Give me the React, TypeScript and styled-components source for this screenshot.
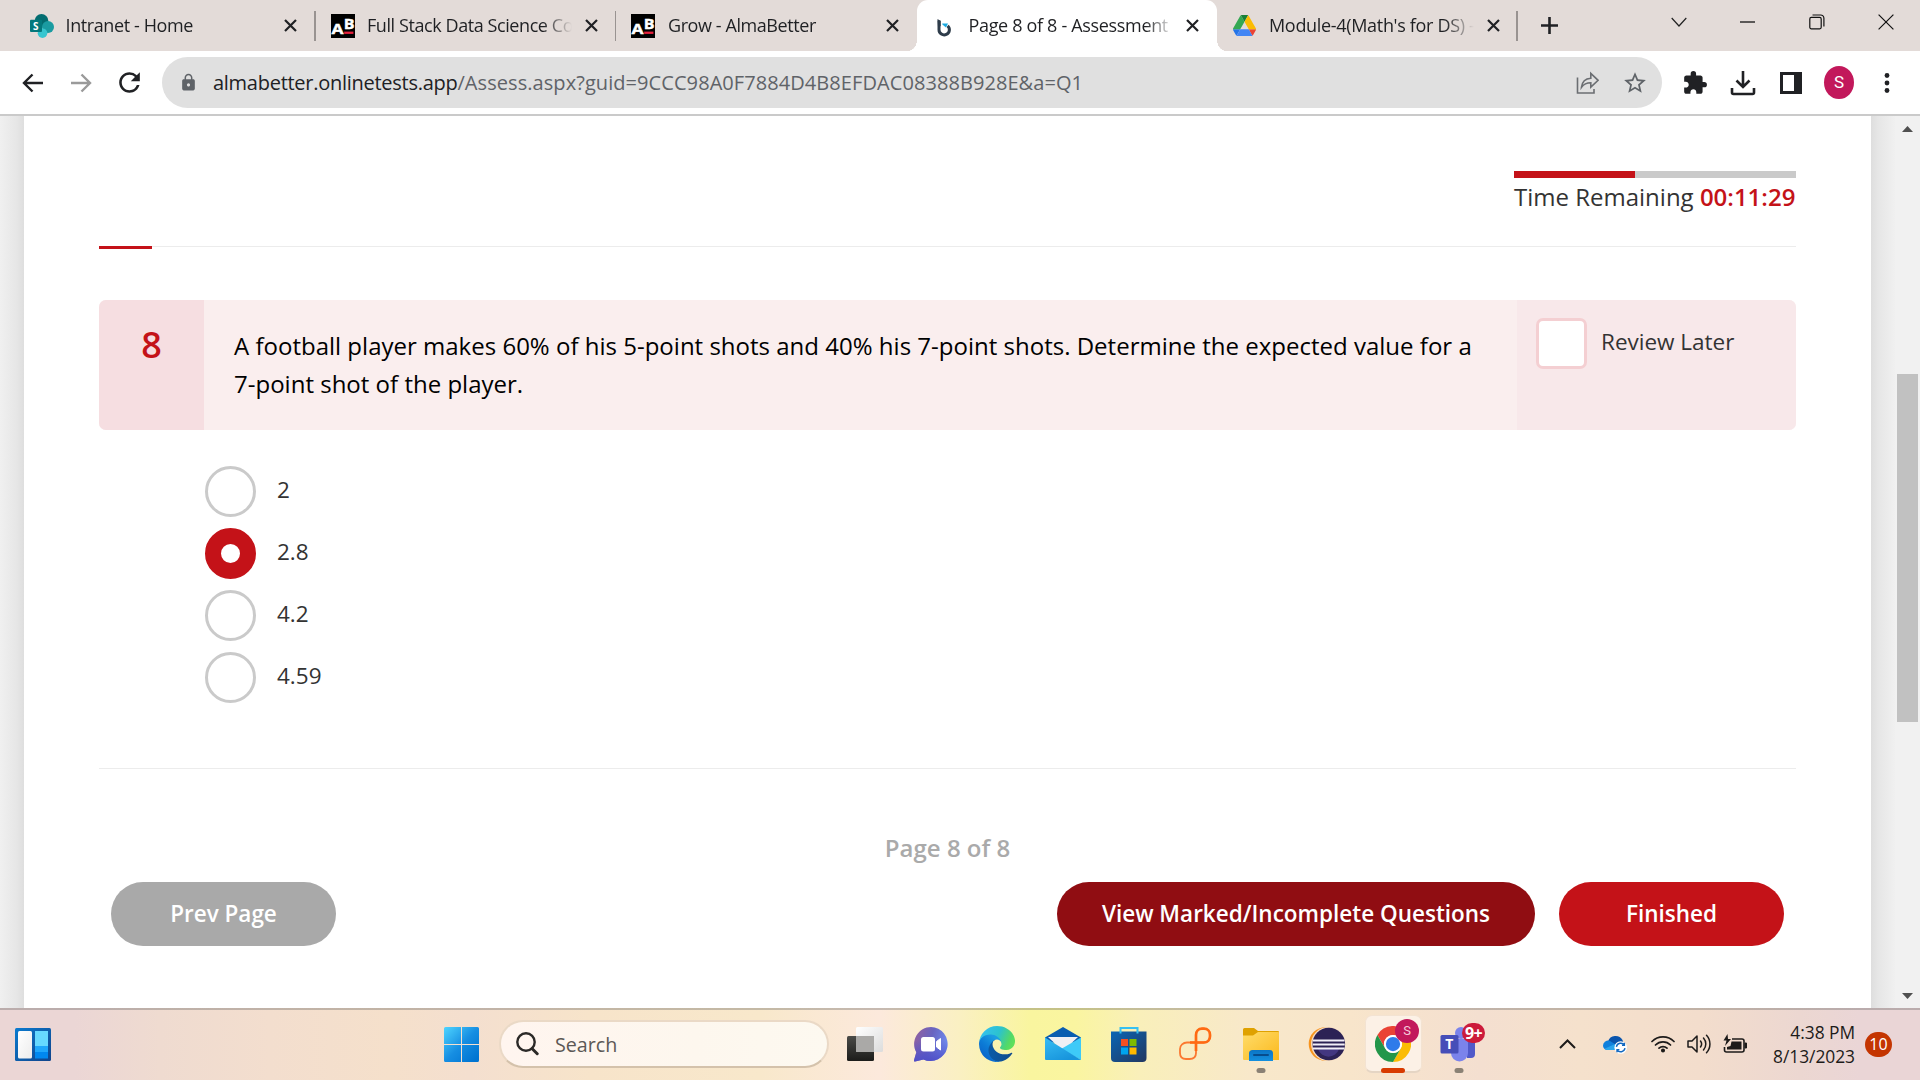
import React from "react";
import styled, { createGlobalStyle } from "styled-components";
import { MdExtension, MdLock, MdRefresh, MdStarBorder } from "react-icons/md";

const Global = createGlobalStyle`
  * { box-sizing: border-box; }
  html, body { margin: 0; padding: 0; background: #fff; overflow: hidden; }
  body { font-family: "Open Sans", "Noto Sans", sans-serif; color: #333; }
  svg { display: block; flex: none; }
`;

const Screen = styled.div`
  width: 1920px;
  height: 1080px;
  display: flex;
  flex-direction: column;
  overflow: hidden;
`;

/* ---------- Browser chrome ---------- */

const TabStrip = styled.div`
  height: 51px;
  flex: none;
  background: #e3dbd8;
  display: flex;
  padding-left: 15px;
`;

const TabBox = styled.div<{ $active?: boolean }>`
  position: relative;
  width: 300.5px;
  flex: none;
  height: 51px;
  display: flex;
  align-items: center;
  padding: 0 7px 0 15px;
  background: ${(p) => (p.$active ? "#fff" : "transparent")};
  border-radius: ${(p) => (p.$active ? "11px 11px 0 0" : "0")};
  ${(p) =>
    p.$active &&
    `&::before, &::after {
      content: "";
      position: absolute;
      bottom: 0;
      width: 9px;
      height: 11px;
    }
    &::before { left: -9px; background: radial-gradient(ellipse 9px 11px at 0 0, transparent 97%, #fff 100%); }
    &::after { right: -9px; background: radial-gradient(ellipse 9px 11px at 100% 0, transparent 97%, #fff 100%); }`}
`;

const Favicon = styled.div<{ $gap?: number }>`
  width: 24px;
  height: 24px;
  margin: 0 ${(p) => p.$gap ?? 12.5}px 0 0;
  display: flex;
  align-items: center;
  justify-content: center;
`;

const TabTitle = styled.div<{ $tracking?: number }>`
  width: 207px;
  height: 30px;
  line-height: 29px;
  font-size: 18px;
  letter-spacing: ${(p) => p.$tracking ?? -0.42}px;
  color: #1f2023;
  white-space: nowrap;
  overflow: hidden;
  mask-image: linear-gradient(90deg, #000 176px, transparent 205px);
`;

const CloseSlot = styled.div`
  flex: 1;
  display: flex;
  justify-content: center;
`;

const Divider = styled.div`
  position: absolute;
  right: 0;
  top: 11px;
  width: 1.5px;
  height: 30px;
  background: #999391;
`;

const NewTab = styled.div`
  width: 64px;
  display: flex;
  align-items: center;
  justify-content: center;
`;

const WindowControls = styled.div`
  margin-left: auto;
  display: flex;
  height: 43px;
`;

const WindowButton = styled.div`
  width: 69px;
  display: flex;
  align-items: center;
  justify-content: center;
`;

const Toolbar = styled.div`
  height: 65px;
  flex: none;
  background: #fff;
  border-bottom: 2px solid #cacaca;
  display: flex;
  align-items: center;
  padding-left: 9px;
`;

const ToolButton = styled.div<{ $w?: number }>`
  width: ${(p) => p.$w ?? 48}px;
  display: flex;
  justify-content: center;
  align-items: center;
  color: #202124;
`;

const AddressBar = styled.div`
  margin-left: 9px;
  width: 1500px;
  height: 51px;
  border-radius: 26px;
  background: #e0e0e0;
  display: flex;
  align-items: center;
  padding: 0 3px 0 17px;
  color: #5f6368;
`;

const Url = styled.div`
  flex: 1;
  margin-left: 15px;
  font-size: 20px;
  line-height: 28px;
  white-space: nowrap;
  color: #5f6368;
  letter-spacing: 0.07px;
`;

const Host = styled.span`
  color: #202124;
  letter-spacing: -0.27px;
`;

const Avatar = styled.div`
  width: 33px;
  height: 33px;
  border-radius: 50%;
  background: #c2185b;
  color: #fff;
  font: 400 17px/33px Roboto, sans-serif;
  text-align: center;
`;

/* ---------- Assessment page ---------- */

const Viewport = styled.div`
  height: 892px;
  flex: none;
  display: flex;
  background: #f1f1f1;
`;

const Gutter = styled.div<{ $side: "left" | "right" }>`
  width: 24px;
  background: linear-gradient(to ${(p) => p.$side}, #dedede, #e6e6e6 30%, #f0f0f0);
`;

const Sheet = styled.main`
  width: 1847px;
  background: #fff;
  padding: 55px 75px 0;
  display: flex;
  flex-direction: column;
`;

const Timer = styled.div`
  width: 282px;
  height: 75px;
  align-self: flex-end;
  font-size: 24px;
  line-height: 38px;
  white-space: nowrap;
`;

const TimerTrack = styled.div`
  height: 7px;
  background: #cacaca;
`;

const TimerFill = styled.div`
  width: 121px;
  height: 7px;
  background: #c41218;
`;

const TimeLeft = styled.span`
  color: #c41218;
  font-weight: 600;
`;

const ProgressRule = styled.div`
  height: 3px;
  background: linear-gradient(#ececec 1px, #fff 1px);
`;

const ProgressFill = styled.div`
  width: 53px;
  height: 3px;
  background: #c41218;
`;

const Question = styled.section`
  margin-top: 51px;
  height: 130px;
  display: flex;
  border-radius: 7px;
  overflow: hidden;
  background: #faeeee;
`;

const QuestionNumber = styled.div`
  width: 105px;
  padding-top: 20px;
  background: #f6dee1;
  color: #c41218;
  font-size: 36px;
  font-weight: 600;
  line-height: 50px;
  text-align: center;
`;

const QuestionText = styled.p`
  margin: 0;
  width: 1313px;
  padding: 27px 30px;
  font-size: 24px;
  line-height: 38px;
  letter-spacing: 0.008px;
  color: #000;
`;

const Review = styled.label`
  flex: 1;
  display: flex;
  padding: 18px 0 0 19px;
  background: #f8e8ea;
  font-size: 22.5px;
  line-height: 48px;
`;

const Checkbox = styled.span`
  width: 51px;
  height: 51px;
  margin-right: 14px;
  border: 3px solid #f4cfd2;
  border-radius: 7px;
  background: #fff;
`;

const Options = styled.div`
  margin: 36px 0 0 106px;
  display: flex;
  flex-direction: column;
  gap: 11px;
`;

const Option = styled.label`
  height: 51px;
  display: flex;
  font-size: 22.5px;
  line-height: 48px;
`;

const Radio = styled.span<{ $checked?: boolean }>`
  width: 51px;
  height: 51px;
  margin-right: 21px;
  border-radius: 50%;
  border: ${(p) => (p.$checked ? "16px solid #c41218" : "3px solid #cacaca")};
  background: #fff;
`;

const Rule = styled.div`
  margin-top: 65px;
  height: 1px;
  background: #ececec;
`;

const PageCount = styled.div`
  margin-top: 61px;
  height: 36px;
  line-height: 36px;
  font-size: 24px;
  font-weight: 600;
  color: #aaa;
  text-align: center;
`;

const Actions = styled.div`
  margin-top: 16px;
  padding: 0 12px;
  display: flex;
  gap: 24px;
`;

const Button = styled.button<{ $bg: string; $w: number }>`
  width: ${(p) => p.$w}px;
  height: 64px;
  border: 0;
  border-radius: 32px;
  background: ${(p) => p.$bg};
  color: #fff;
  font: 600 22.5px/64px "Open Sans", sans-serif;
  padding: 0;
  white-space: nowrap;
  &:first-child { margin-right: auto; }
`;

const Scrollbar = styled.div`
  width: 25px;
  padding: 10px 2px 9px;
  display: flex;
  flex-direction: column;
  align-items: center;
`;

const Thumb = styled.div`
  margin: 242px 0 auto;
  width: 21px;
  height: 348px;
  background: #c1c1c1;
`;

/* ---------- Taskbar ---------- */

const Taskbar = styled.div`
  height: 72px;
  flex: none;
  display: flex;
  align-items: center;
  background: linear-gradient(rgba(80, 80, 80, 0.31) 2px, transparent 2px),
    linear-gradient(90deg, #ebd6d5 0, #ebd6d5 75px, #efdbd0 160px, #f3dece 270px, #f5e0cb 390px, #f4dfcf 470px, #f7e4ca 590px, #f8e8cb 760px, #fce9dc 880px, #faf0c2 960px, #f9f59f 1030px, #faf5a0 1075px, #f9efba 1140px, #f8e8ca 1250px, #f8e5cb 1350px, #f4dfd0 1480px, #f5e1cc 1580px, #f3ddcc 1700px, #ecd7d1 1800px, #ead5d6 1860px);
`;

const WidgetsSlot = styled.div`
  width: 437px;
  padding-left: 15px;
`;

const StartSlot = styled.div`
  width: 62px;
  padding-left: 7px;
`;

const SearchBox = styled.div`
  width: 330px;
  height: 48px;
  margin-right: 3px;
  border-radius: 24px;
  border: 2px solid #ead9c6;
  border-bottom-color: #d4c2ab;
  background: linear-gradient(90deg, #fff5ef, #fdf7ee 60%, #fdf9f0);
  display: flex;
  align-items: center;
  padding-left: 15px;
  font-size: 19.7px;
  color: #5c5855;
  gap: 16px;
`;

const SearchLabel = styled.span`
  line-height: 26px;
  padding-top: 1px;
`;

const AppSlot = styled.div`
  position: relative;
  width: 66px;
  height: 58px;
  display: flex;
  align-items: center;
  justify-content: center;
`;

const ActiveTile = styled.div`
  width: 57px;
  height: 58px;
  border-radius: 7px;
  border: 1px solid #f3e3d2;
  border-bottom: 2px solid #e5d5c4;
  background: #fcf1e6;
  display: flex;
  align-items: center;
  justify-content: center;
`;

const Indicator = styled.div<{ $active?: boolean }>`
  position: absolute;
  bottom: 0;
  left: 50%;
  transform: translateX(-50%);
  width: ${(p) => (p.$active ? 24 : 9)}px;
  height: 5px;
  border-radius: 3px;
  background: ${(p) => (p.$active ? "#d83b01" : "#8a8175")};
`;

const Badge = styled.div<{ $bg: string; $w: number; $x: number; $y: number }>`
  position: absolute;
  left: ${(p) => p.$x}px;
  top: ${(p) => p.$y}px;
  width: ${(p) => p.$w}px;
  height: ${(p) => (p.$w === 24 ? 24 : 20)}px;
  border-radius: 12px;
  background: ${(p) => p.$bg};
  display: flex;
  align-items: center;
  justify-content: center;
`;

const AvatarLetter = styled.span`
  font: 400 13px/24px Roboto, sans-serif;
  color: #f6c9da;
`;

const UnreadCount = styled.span`
  font: 700 16px/20px "Open Sans", sans-serif;
  letter-spacing: -0.6px;
  color: #fff;
`;

const Tray = styled.div`
  margin-left: auto;
  display: flex;
  align-items: center;
  padding: 0 28px 0 0;
`;

const TrayItem = styled.div<{ $gap: number }>`
  margin-right: ${(p) => p.$gap}px;
`;

const Clock = styled.div`
  width: 96px;
  padding-top: 0;
  text-align: right;
  font-size: 17.4px;
  line-height: 24px;
  letter-spacing: -0.05px;
  color: #1d1b1a;
  margin: -1px 10px 0 0;
`;

const Notice = styled.div`
  width: 27px;
  height: 25px;
  border-radius: 13px;
  background: #c43501;
  color: #fff;
  font-size: 16px;
  line-height: 24px;
  text-align: center;
`;

const AbText = styled.text`
  font: 700 14px "Open Sans", sans-serif;
`;

const SvgLetter = styled.text`
  font: 700 10px "Open Sans", sans-serif;
`;

const TeamsLetter = styled.text`
  font: 700 14px "Open Sans", sans-serif;
`;

/* ---------- Icons ---------- */

const SharePoint = () => (
  <svg width="24" height="24" viewBox="0 0 24 24">
    <circle cx="11.5" cy="6.8" r="6.8" fill="#036c70" />
    <circle cx="18" cy="13" r="6" fill="#1a9ba1" />
    <circle cx="12.5" cy="19.2" r="4.8" fill="#37c6d0" />
    <rect x="0" y="5.7" width="12" height="12.4" rx="1" fill="#03787c" />
    <SvgLetter x="3" y="15.6" fill="#fff">S</SvgLetter>
  </svg>
);

const AlmaBetter = () => (
  <svg width="24" height="24" viewBox="0 0 24 24">
    <rect width="24" height="24" fill="#000" />
    <AbText x="0.5" y="20" fill="#fff" stroke="#fff" strokeWidth="0.4" fontSize="16" textLength="12" lengthAdjust="spacingAndGlyphs">A</AbText>
    <AbText x="12.8" y="15.2" fill="#fff" stroke="#fff" strokeWidth="0.4" textLength="10.800" lengthAdjust="spacingAndGlyphs">B</AbText>
    <rect x="13.2" y="17.6" width="9.2" height="2.3" fill="#e8203c" />
  </svg>
);

const Assessment = () => (
  <svg width="16" height="24" viewBox="0 0 16 24">
    <path d="M1.500 5l3.200 2v5L2 13.6z" fill="#2e3c4a" />
    <path d="M3 6.500v9.200a5.200 5.200 0 1 0 8.600-3.900" fill="none" stroke="#2e3c4a" strokeWidth="3" />
    <path d="M6.200 9.600h5.800l-2 4-3.600-3z" fill="#19a9e0" />
  </svg>
);

const Drive = () => (
  <svg width="23" height="21" viewBox="0 0 87.3 78" preserveAspectRatio="none">
    <path d="M6.6 66.85l3.85 6.65c.8 1.4 1.95 2.5 3.3 3.3L27.5 53H0c0 1.55.4 3.1 1.2 4.5z" fill="#2474e8" />
    <path d="M43.65 25L29.9 1.2c-1.35.8-2.5 1.9-3.3 3.3l-25.4 44A9.06 9.06 0 0 0 0 53h27.5z" fill="#34a853" />
    <path d="M73.55 76.8c1.35-.8 2.5-1.9 3.3-3.3l1.6-2.75L86.1 57.5c.8-1.4 1.2-2.95 1.2-4.5H59.8l5.85 11.5z" fill="#ea4335" />
    <path d="M43.65 25L57.4 1.2C56.05.4 54.5 0 52.9 0H34.4c-1.6 0-3.15.45-4.5 1.2z" fill="#188038" />
    <path d="M59.8 53H27.5L13.75 76.8c1.35.8 2.9 1.2 4.5 1.2h50.8c1.6 0 3.15-.45 4.5-1.2z" fill="#4285f4" />
    <path d="M73.4 26.5l-12.7-22c-.8-1.4-1.95-2.5-3.3-3.3L43.65 25 59.8 53h27.45c0-1.55-.4-3.1-1.2-4.5z" fill="#fbbc04" />
  </svg>
);

const CloseMark = () => (
  <svg width="13" height="13" viewBox="0 0 13 13">
    <path d="M1 1l11 11M12 1L1 12" stroke="#202124" strokeWidth="2.2" />
  </svg>
);

const Arrow = ({ flip, color }: { flip?: boolean; color: string }) => (
  <svg width="22" height="20" viewBox="0 0 22 20">
    <path
      d={flip ? "M1 10h18M11.5 1.5L20 10l-8.5 8.5" : "M21 10H3M10.5 1.5L2 10l8.5 8.5"}
      fill="none"
      stroke={color}
      strokeWidth="2.4"
    />
  </svg>
);

const ShareIcon = () => (
  <svg width="24" height="24" viewBox="0 0 24 24" fill="none" stroke="#6b6e72" strokeWidth="1.6">
    <path d="M2.500 6.500v15.500h16.500v-4" />
    <path d="M6.500 16.200c.6-5.600 3.700-8.600 9.300-9V2.300l7.300 7-7.300 6.800v-4.400c-4.200 0-7.100 1.400-9.300 4.500z" />
  </svg>
);

const DownloadIcon = () => (
  <svg width="26" height="26" viewBox="0 0 26 26" fill="none" stroke="#202124" strokeWidth="2.600">
    <path d="M13 1v15M6.500 10.500L13 17l6.500-6.500M2 18v4.500a1.500 1.500 0 0 0 1.500 1.500h19a1.500 1.500 0 0 0 1.500-1.500V18" />
  </svg>
);

const PanelIcon = () => (
  <svg width="22" height="22" viewBox="0 0 22 22">
    <path d="M0 0h22v22H0zM3 3v16h11V3z" fill="#202124" fillRule="evenodd" />
  </svg>
);

const DotsIcon = () => (
  <svg width="6" height="20" viewBox="0 0 6 20" fill="#202124">
    <circle cx="3" cy="2.500" r="2.400" />
    <circle cx="3" cy="10" r="2.400" />
    <circle cx="3" cy="17.500" r="2.400" />
  </svg>
);

const Triangle = ({ down }: { down?: boolean }) => (
  <svg width="11" height="6" viewBox="0 0 11 6">
    <path d={down ? "M0 0h11L5.5 6z" : "M0 6h11L5.5 0z"} fill="#505050" />
  </svg>
);

const Widgets = () => (
  <svg width="36" height="33" viewBox="0 0 36 33">
    <defs>
      <linearGradient id="wd" x1="0" y1="0" x2="1" y2="1"><stop stopColor="#0a7bd0" /><stop offset="1" stopColor="#11438a" /></linearGradient>
      <linearGradient id="ww" x1="0" y1="0" x2="1" y2="1"><stop stopColor="#fff" /><stop offset="1" stopColor="#ececec" /></linearGradient>
    </defs>
    <rect width="36" height="33" rx="1.500" fill="url(#wd)" />
    <rect x="3" y="3" width="14" height="27.500" rx="1.500" fill="url(#ww)" />
    <path d="M20 3h13v15H20z" fill="#66d9ff" />
    <path d="M20 18h13v6H20z" fill="#1fa7fb" />
    <path d="M20 24h13v6.500H20z" fill="#0088f0" />
  </svg>
);

const Windows = () => (
  <svg width="35" height="35" viewBox="0 0 35 35">
    <defs>
      <linearGradient id="win" gradientUnits="userSpaceOnUse" x1="0" y1="0" x2="32" y2="32"><stop stopColor="#4fd5ff" /><stop offset="0.550" stopColor="#168ee2" /><stop offset="1" stopColor="#0074d1" /></linearGradient>
    </defs>
    <path d="M1.500 0H17v17H0V1.500A1.500 1.500 0 0 1 1.500 0zM18 0h15.500A1.500 1.500 0 0 1 35 1.500V17H18zM0 18h17v17H1.500A1.500 1.500 0 0 1 0 33.500zM18 18h17v15.500a1.500 1.500 0 0 1-1.500 1.500H18z" fill="url(#win)" />
  </svg>
);

const Magnifier = () => (
  <svg width="23" height="24" viewBox="0 0 23 24" fill="none" stroke="#2b2927" strokeLinecap="round">
    <circle cx="10" cy="10" r="8.700" strokeWidth="2.400" />
    <path d="M16.200 16.700l5 5" strokeWidth="3" />
  </svg>
);

const TaskView = () => (
  <svg width="48" height="48" viewBox="0 0 48 48">
    <defs>
      <linearGradient id="tvd" x1="0" y1="0" x2="0" y2="1"><stop stopColor="#4b4b48" /><stop offset="1" stopColor="#1c1c1a" /></linearGradient>
      <linearGradient id="tvl" x1="0" y1="0" x2="1" y2="1"><stop stopColor="#fff" /><stop offset="1" stopColor="#dcdcdc" /></linearGradient>
    </defs>
    <rect x="6" y="16" width="27" height="25" rx="1.500" fill="url(#tvd)" />
    <rect x="15" y="7" width="27" height="25" rx="1.500" fill="url(#tvl)" />
    <path d="M15 16h18v16H16.500a1.500 1.500 0 0 1-1.500-1.500z" fill="#aaa9a7" />
  </svg>
);

const Chat = () => (
  <svg width="48" height="48" viewBox="0 0 48 48">
    <defs>
      <linearGradient id="ch" x1="0" y1="0.200" x2="1" y2="0.500"><stop stopColor="#9160a0" /><stop offset="0.500" stopColor="#6964c0" /><stop offset="1" stopColor="#6f8cf0" /></linearGradient>
      <linearGradient id="ch2" x1="0" y1="0" x2="0" y2="1"><stop offset="0.400" stopColor="#4f4fc8" stopOpacity="0" /><stop offset="1" stopColor="#4f4fc8" /></linearGradient>
    </defs>
    {["url(#ch)", "url(#ch2)"].map((f) => (
      <path key={f} d="M24 7a17 17 0 1 1-7.600 32.400L8 41.500c-1 .2-1.200-.6-1-1.200l2.300-8A17 17 0 0 1 24 7z" fill={f} />
    ))}
    <rect x="14" y="17" width="14" height="14.500" rx="2.500" fill="#fff" />
    <path d="M29.500 21.500l4-3v11.500l-4-3z" fill="#fff" stroke="#fff" />
  </svg>
);

const Edge = () => (
  <svg width="36" height="36" viewBox="0 0 256 256">
    <defs>
      <linearGradient id="e1" x1="0.200" y1="0.700" x2="1" y2="0.700"><stop stopColor="#0c59a4" /><stop offset="1" stopColor="#114a8b" /></linearGradient>
      <linearGradient id="e2" x1="0.700" y1="0.200" x2="0.200" y2="0.900"><stop stopColor="#1b9de2" /><stop offset="0.500" stopColor="#0c7bd6" /><stop offset="1" stopColor="#0a63c8" /></linearGradient>
      <linearGradient id="e3" x1="0" y1="0.300" x2="1" y2="0.600"><stop stopColor="#35c1f1" /><stop offset="0.500" stopColor="#2cc2cf" /><stop offset="0.850" stopColor="#52d967" /><stop offset="1" stopColor="#5fe05a" /></linearGradient>
    </defs>
    <path d="M231 190.500c-3.400 1.800-6.900 3.400-10.500 4.700a101 101 0 0 1-35.900 6.500c-47.300 0-88.500-32.500-88.500-74.300a31.500 31.500 0 0 1 16.400-27.300c-42.800 1.800-53.800 46.400-53.800 72.500 0 73.900 68.100 81.400 82.800 81.400 7.900 0 19.800-2.300 27-4.600l1.300-.4a128.300 128.300 0 0 0 66.600-52.800 4 4 0 0 0-5.400-5.700z" fill="url(#e1)" />
    <path d="M105.700 241.400a79.200 79.200 0 0 1-22.700-21.300 80.700 80.700 0 0 1 29.500-120c3.200-1.500 8.500-4.100 15.600-4a32.400 32.400 0 0 1 25.700 13 31.900 31.900 0 0 1 6.300 18.700c0-.2 24.500-79.600-80-79.600-43.900 0-80 41.600-80 78.200a130.200 130.200 0 0 0 12.100 56 128 128 0 0 0 156.400 67 75.500 75.500 0 0 1-62.800-8z" fill="url(#e2)" />
    <path d="M152.300 148.900c-.9 1-3.400 2.500-3.400 5.600 0 2.600 1.700 5.200 4.800 7.300 14.400 10.100 41.700 8.700 41.800 8.700a60 60 0 0 0 30.300-8.400c18.800-11 30.400-31.100 30.400-52.900.3-22.400-8-37.300-11.300-43.900C223.400 23.900 177.400 0 128 0A128 128 0 0 0 0 126.200c.5-36.500 36.800-66 80-66 3.500 0 23.500.3 42 10.100 16.300 8.600 24.900 19 30.800 29.200 6.200 10.700 7.300 24.100 7.300 29.500 0 5.300-2.700 13.300-7.800 19.900z" fill="url(#e3)" />
  </svg>
);

const Mail = () => (
  <svg width="48" height="48" viewBox="0 0 48 48">
    <defs>
      <linearGradient id="ml" x1="0" y1="0" x2="0.600" y2="1"><stop stopColor="#38bdf3" /><stop offset="1" stopColor="#1794dc" /></linearGradient>
    </defs>
    <path d="M6 17.500L24 7l18 10.500v5H6z" fill="#0a5db0" />
    <path d="M9 17h30L24 31z" fill="#f1f0f4" />
    <path d="M42 17.500v22.500L22 29z" fill="#3ecaf8" />
    <path d="M6 17.500L42 40H7a1 1 0 0 1-1-1z" fill="url(#ml)" />
  </svg>
);

const Store = () => (
  <svg width="48" height="48" viewBox="0 0 48 48">
    <defs>
      <linearGradient id="st" x1="0" y1="0" x2="1" y2="1"><stop stopColor="#0a66b5" /><stop offset="1" stopColor="#223760" /></linearGradient>
    </defs>
    <path d="M6 11.500h35.500V38a4 4 0 0 1-4 4H10a4 4 0 0 1-4-4z" fill="url(#st)" />
    <path d="M15.500 13.500V8h17v5.500" fill="none" stroke="#35c0f2" strokeWidth="2" />
    <path d="M16 19h7v7h-7z" fill="#f25022" />
    <path d="M24.500 19h7v7h-7z" fill="#7fba00" />
    <path d="M16 27.500h7v7h-7z" fill="#00a4ef" />
    <path d="M24.500 27.500h7v7h-7z" fill="#ffb900" />
  </svg>
);

const Loop = () => (
  <svg width="48" height="48" viewBox="0 0 48 48" fill="none">
    <path d="M25 33V15c0-4 2.500-6.300 6-6.300h2c3.500 0 6 2.500 6 6v1.500c0 3.800-2.600 6.300-6.300 6.300H16c-3.800 0-7 2.700-7 6.500V33c0 3.700 2.200 6 6 6h3.500c4 0 6.500-2 6.500-6z" stroke="#fb7830" strokeWidth="1.800" />
    <path d="M25 31V15c0-4 2.500-6.300 6-6.300h2c3.500 0 6 2.500 6 6v1.500c0 3.800-2.600 6.300-6.300 6.300H19" stroke="#ff6a13" strokeWidth="2.700" />
  </svg>
);

const Folder = () => (
  <svg width="48" height="48" viewBox="0 0 48 48">
    <defs>
      <linearGradient id="fo" x1="0" y1="0" x2="1" y2="1"><stop stopColor="#ffdc6a" /><stop offset="1" stopColor="#fbb91d" /></linearGradient>
      <linearGradient id="fb" x1="0" y1="0" x2="0" y2="1"><stop stopColor="#0b74c4" /><stop offset="1" stopColor="#1490df" /></linearGradient>
    </defs>
    <path d="M6 9.500A1.500 1.500 0 0 1 7.500 8h9.500l4 3h20a1 1 0 0 1 1 1v6H6z" fill="#dfa100" />
    <path d="M6 15.500h10l5-3.500h20.500l.5.500V40H7a1 1 0 0 1-1-1z" fill="url(#fo)" />
    <path d="M12 41v-7.500a3.500 3.500 0 0 1 3.500-3.500h17a3.500 3.500 0 0 1 3.500 3.500V41z" fill="url(#fb)" />
    <path d="M17 35h14" stroke="#074c8c" strokeWidth="2" strokeLinecap="round" />
  </svg>
);

const Eclipse = () => (
  <svg width="48" height="48" viewBox="0 0 48 48">
    <circle cx="22.500" cy="24" r="16.800" fill="#f7941e" />
    <circle cx="25" cy="24" r="17" fill="#f6dcc0" />
    <circle cx="25.800" cy="24" r="16.300" fill="#2c2255" />
    <path d="M15 29h21a11 11 0 0 1-21 0z" fill="#433780" />
    <path d="M10 20.500h31.500M9.700 24.500h32M10 28.500h31.500" stroke="#f2eff8" strokeWidth="2" />
  </svg>
);

const Chrome = () => (
  <svg width="36" height="36" viewBox="0 0 48 48">
    <path d="M24 12h20.800A24 24 0 0 0 3.200 12l10.400 18A12 12 0 0 1 24 12z" fill="#ea4335" />
    <path d="M34.400 30L24 48A24 24 0 0 0 44.800 12H24a12 12 0 0 1 10.400 18z" fill="#fbbc04" />
    <path d="M13.600 30L3.200 12A24 24 0 0 0 24 48l10.400-18a12 12 0 0 1-20.800 0z" fill="#23964a" />
    <circle cx="24" cy="24" r="12" fill="#fff" />
    <circle cx="24" cy="24" r="9.500" fill="#2f7bea" />
  </svg>
);

const Teams = () => (
  <svg width="48" height="48" viewBox="0 0 48 48">
    <circle cx="38.500" cy="14" r="5" fill="#4b53bc" />
    <path d="M32 20h8v14a4 4 0 0 1-4 4h-4z" fill="#5059c9" />
    <circle cx="26" cy="13" r="6" fill="#7b83eb" />
    <path d="M16 19h17v14a8.500 8.500 0 0 1-17 0z" fill="#7b83eb" />
    <rect x="5.500" y="15" width="18" height="18.500" rx="1.500" fill="#464eb8" />
    <TeamsLetter x="10.300" y="29.300" fill="#fff">T</TeamsLetter>
  </svg>
);

const OneDrive = () => (
  <svg width="24" height="20" viewBox="0 0 24 20">
    <path d="M5 7.500A8 8 0 0 1 19.500 6l1 3-9 6z" fill="#0a55ad" />
    <path d="M0 11.500a5 5 0 0 1 7-4.500l13 8-1 1H4.500A4.500 4.500 0 0 1 0 11.500z" fill="#1080dc" />
    <path d="M1.500 14.700L12 10l6 6H4.500a4.500 4.500 0 0 1-3-1.300z" fill="#2aa5ec" />
    <circle cx="17.700" cy="13.500" r="6.300" fill="#fff" />
    <path d="M13.400 12.800a4.400 4.400 0 0 1 8-1.600m0-2.400v2.600H19M22 14.200a4.400 4.400 0 0 1-8 1.600m0 2.400v-2.600h2.400" fill="none" stroke="#1268c0" strokeWidth="1.400" />
  </svg>
);

const Wifi = () => (
  <svg width="24" height="18" viewBox="0 0 24 18" fill="none" stroke="#1d1b1a" strokeWidth="1.700" strokeLinecap="round">
    <path d="M1 6.500a15.500 15.500 0 0 1 22 0M4.500 10a10.600 10.600 0 0 1 15 0M8 13.200a5.700 5.700 0 0 1 8 0" />
    <circle cx="12" cy="15.500" r="1.200" fill="#1d1b1a" />
  </svg>
);

const Volume = () => (
  <svg width="25" height="20" viewBox="0 0 25 20" fill="none" stroke="#1d1b1a" strokeWidth="1.500" strokeLinecap="round" strokeLinejoin="round">
    <path d="M1 7h4l5-5v16l-5-5H1zM13.500 7a5 5 0 0 1 0 6M16.500 4a9 9 0 0 1 0 12M19.500 1.200a13 13 0 0 1 0 17.600" />
  </svg>
);

const Battery = () => (
  <svg width="25" height="20" viewBox="0 0 25 20">
    <path d="M9 5h10a2 2 0 0 1 2 2v9a2 2 0 0 1-2 2H3.500a2 2 0 0 1-2-2v-3" fill="none" stroke="#1d1b1a" strokeWidth="1.600" />
    <path d="M8.500 7.500h10v8H4v-2.500l3.500-1z" fill="#1d1b1a" />
    <path d="M22 9h1.500v5H22z" fill="#1d1b1a" stroke="#1d1b1a" />
    <path d="M4.500 0L.5 6.500h3L2 12l6-7H5z" fill="#1d1b1a" />
  </svg>
);

/* ---------- Page data ---------- */

const tabs = [
  { title: "Intranet - Home", icon: <SharePoint />, gap: 11.5, tracking: -0.4 },
  { title: "Full Stack Data Science Co", icon: <AlmaBetter /> },
  { title: "Grow - AlmaBetter", icon: <AlmaBetter />, plain: true, gap: 13 },
  { title: "Page 8 of 8 - Assessment", icon: <Assessment />, active: true, gap: 13, tracking: -0.33 },
  { title: "Module-4(Math's for DS) -", icon: <Drive />, gap: 13, tracking: -0.32 },
];

const answers = ["2", "2.8", "4.2", "4.59"];

export default function App() {
  return (
    <Screen>
      <Global />
      <TabStrip>
        {tabs.map((t) => (
          <TabBox key={t.title} $active={t.active}>
            <Favicon $gap={t.gap}>{t.icon}</Favicon>
            <TabTitle $tracking={t.tracking}>{t.title}</TabTitle>
            <CloseSlot><CloseMark /></CloseSlot>
            {!t.active && !t.plain && <Divider />}
          </TabBox>
        ))}
        <NewTab>
          <svg width="17" height="17" viewBox="0 0 17 17"><path d="M8.500 0v17M0 8.500h17" stroke="#202124" strokeWidth="2.600" /></svg>
        </NewTab>
        <WindowControls>
          <WindowButton>
            <svg width="16" height="10" viewBox="0 0 16 10"><path d="M.7 1L8 9l7.300-8" fill="none" stroke="#222" strokeWidth="1.200" /></svg>
          </WindowButton>
          <WindowButton>
            <svg width="15" height="2" viewBox="0 0 15 2"><path d="M0 1h15" stroke="#111" strokeWidth="1.300" /></svg>
          </WindowButton>
          <WindowButton>
            <svg width="16" height="16" viewBox="0 0 16 16" fill="none" stroke="#111" strokeWidth="1.200">
              <rect x="0.800" y="3.400" width="11.400" height="11.400" rx="1.500" />
              <path d="M3.500 1h8.200a3.200 3.200 0 0 1 3.200 3.200v8.300" />
            </svg>
          </WindowButton>
          <WindowButton>
            <svg width="16" height="16" viewBox="0 0 16 16"><path d="M.6.600l14.800 14.800M15.400.600L.6 15.400" stroke="#111" strokeWidth="1.200" /></svg>
          </WindowButton>
        </WindowControls>
      </TabStrip>

      <Toolbar>
        <ToolButton><Arrow color="#202124" /></ToolButton>
        <ToolButton><Arrow flip color="#9a9a9a" /></ToolButton>
        <ToolButton><MdRefresh size={31} /></ToolButton>
        <AddressBar>
          <MdLock size={19} />
          <Url><Host>almabetter.onlinetests.app</Host>/Assess.aspx?guid=9CCC98A0F7884D4B8EFDAC08388B928E&amp;a=Q1</Url>
          <ToolButton><ShareIcon /></ToolButton>
          <ToolButton><MdStarBorder size={26} color="#5f6368" /></ToolButton>
        </AddressBar>
        <ToolButton $w={66}><MdExtension size={26} /></ToolButton>
        <ToolButton $w={30}><DownloadIcon /></ToolButton>
        <ToolButton $w={66}><PanelIcon /></ToolButton>
        <ToolButton $w={30}><Avatar>S</Avatar></ToolButton>
        <ToolButton $w={66}><DotsIcon /></ToolButton>
      </Toolbar>

      <Viewport>
        <Gutter $side="left" />
        <Sheet>
          <Timer>
            <TimerTrack><TimerFill /></TimerTrack>
            Time Remaining <TimeLeft>00:11:29</TimeLeft>
          </Timer>
          <ProgressRule><ProgressFill /></ProgressRule>
          <Question>
            <QuestionNumber>8</QuestionNumber>
            <QuestionText>
              A football player makes 60% of his 5-point shots and 40% his 7-point shots. Determine the expected value for a
              <br />
              7-point shot of the player.
            </QuestionText>
            <Review><Checkbox />Review Later</Review>
          </Question>
          <Options>
            {answers.map((a) => (
              <Option key={a}><Radio $checked={a === "2.8"} />{a}</Option>
            ))}
          </Options>
          <Rule />
          <PageCount>Page 8 of 8</PageCount>
          <Actions>
            <Button $bg="#a9a9a9" $w={225}>Prev Page</Button>
            <Button $bg="#900d12" $w={478}>View Marked/Incomplete Questions</Button>
            <Button $bg="#c41218" $w={225}>Finished</Button>
          </Actions>
        </Sheet>
        <Gutter $side="right" />
        <Scrollbar>
          <Triangle />
          <Thumb />
          <Triangle down />
        </Scrollbar>
      </Viewport>

      <Taskbar>
        <WidgetsSlot><Widgets /></WidgetsSlot>
        <StartSlot><Windows /></StartSlot>
        <SearchBox><Magnifier /><SearchLabel>Search</SearchLabel></SearchBox>
        <AppSlot><TaskView /></AppSlot>
        <AppSlot><Chat /></AppSlot>
        <AppSlot><Edge /></AppSlot>
        <AppSlot><Mail /></AppSlot>
        <AppSlot><Store /></AppSlot>
        <AppSlot><Loop /></AppSlot>
        <AppSlot><Folder /><Indicator /></AppSlot>
        <AppSlot><Eclipse /></AppSlot>
        <AppSlot>
          <ActiveTile><Chrome /></ActiveTile>
          <Badge $bg="#c2185b" $w={24} $x={35} $y={4}><AvatarLetter>S</AvatarLetter></Badge>
          <Indicator $active />
        </AppSlot>
        <AppSlot>
          <Teams />
          <Badge $bg="#cc1b3b" $w={23} $x={36} $y={8}><UnreadCount>9+</UnreadCount></Badge>
          <Indicator />
        </AppSlot>
        <Tray>
          <TrayItem $gap={27}>
            <svg width="17" height="10" viewBox="0 0 17 10"><path d="M1 9l7.500-7.500L16 9" fill="none" stroke="#1d1b1a" strokeWidth="2" /></svg>
          </TrayItem>
          <TrayItem $gap={24}><OneDrive /></TrayItem>
          <TrayItem $gap={12}><Wifi /></TrayItem>
          <TrayItem $gap={11}><Volume /></TrayItem>
          <TrayItem $gap={11}><Battery /></TrayItem>
          <Clock>4:38 PM<br />8/13/2023</Clock>
          <Notice>10</Notice>
        </Tray>
      </Taskbar>
    </Screen>
  );
}
